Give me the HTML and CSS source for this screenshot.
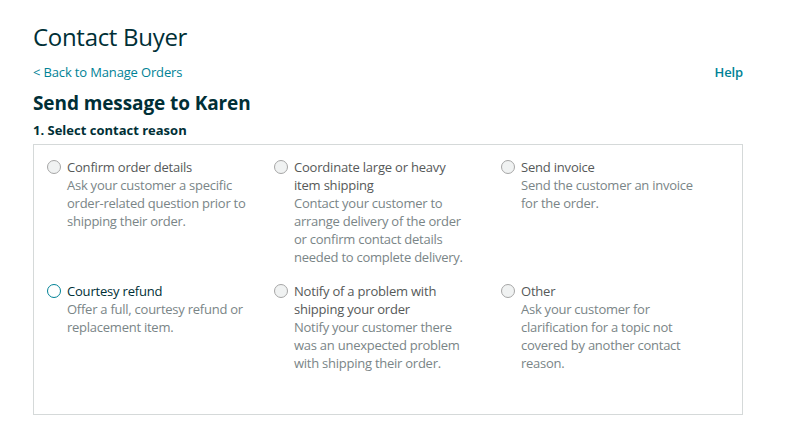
FILE: index.html
```html
<!DOCTYPE html>
<html>
<head>
<meta charset="utf-8">
<link rel="stylesheet" href="styles.css">
</head>
<body>
<div class="page">
  <h1 class="title">Contact Buyer</h1>
  <div class="navrow">
    <a class="link" href="#">&lt; Back to Manage Orders</a>
    <a class="link help" href="#">Help</a>
  </div>
  <h2 class="subtitle">Send message to Karen</h2>
  <h3 class="step">1. Select contact reason</h3>
  <div class="box">
    <div class="option">
      <span class="radio"></span>
      <div class="otext">
        <div class="label">Confirm order details</div>
        <div class="desc">Ask your customer a specific order-related question prior to shipping their order.</div>
      </div>
    </div>
    <div class="option">
      <span class="radio"></span>
      <div class="otext narrow">
        <div class="label">Coordinate large or heavy item shipping</div>
        <div class="desc">Contact your customer to arrange delivery of the order or confirm contact details needed to complete delivery.</div>
      </div>
    </div>
    <div class="option">
      <span class="radio"></span>
      <div class="otext">
        <div class="label">Send invoice</div>
        <div class="desc">Send the customer an invoice for the order.</div>
      </div>
    </div>
    <div class="option">
      <span class="radio focus"></span>
      <div class="otext">
        <div class="label dark">Courtesy refund</div>
        <div class="desc">Offer a full, courtesy refund or replacement item.</div>
      </div>
    </div>
    <div class="option">
      <span class="radio"></span>
      <div class="otext narrow">
        <div class="label">Notify of a problem with shipping your order</div>
        <div class="desc">Notify your customer there was an unexpected problem with shipping their order.</div>
      </div>
    </div>
    <div class="option">
      <span class="radio"></span>
      <div class="otext">
        <div class="label">Other</div>
        <div class="desc">Ask your customer for clarification for a topic not covered by another contact reason.</div>
      </div>
    </div>
  </div>
</div>
</body>
</html>
```

FILE: styles.css
```css
* { box-sizing: border-box; }
html, body { margin: 0; padding: 0; background: #fff; }
body { font-family: "Open Sans", "Noto Sans", Arial, sans-serif; color: #002f36; }
.page { width: 710px; margin-left: 33px; padding-top: 20px; }
.title { font-size: 24px; font-weight: 400; margin: 0; line-height: 34px; color: #002f36; letter-spacing: -0.3px; }
.navrow { display: flex; justify-content: space-between; margin-top: 8px; line-height: 20px; }
.link { color: #008296; font-size: 13px; text-decoration: none; letter-spacing: -0.15px; }
.help { font-weight: 600; }
.subtitle { font-size: 19px; font-weight: 700; margin: 8px 0 0; line-height: 26px; color: #002f36; letter-spacing: -0.1px; }
.step { font-size: 13px; font-weight: 700; margin: 5px 0 0; line-height: 18px; color: #002f36; }
.box { margin-top: 5px; border: 1px solid #d5d9d9; padding: 13px 13px 42px; display: grid; grid-template-columns: 227px 227px 227px; row-gap: 16px; }
.option { display: flex; align-items: flex-start; }
.radio { flex: none; width: 14px; height: 14px; border-radius: 50%; border: 1px solid #a6a6a6; background: #f0f2f2; margin-top: 2px; margin-right: 6px; }
.radio.focus { border: 1.5px solid #008296; background: #fff; }
.otext { width: 182px; font-size: 13px; line-height: 18px; letter-spacing: -0.25px; }
.otext.narrow { width: 174px; }
.label { color: #565959; letter-spacing: -0.2px; }
.label.dark { color: #002f36; }
.desc { color: #7a8587; }
```
